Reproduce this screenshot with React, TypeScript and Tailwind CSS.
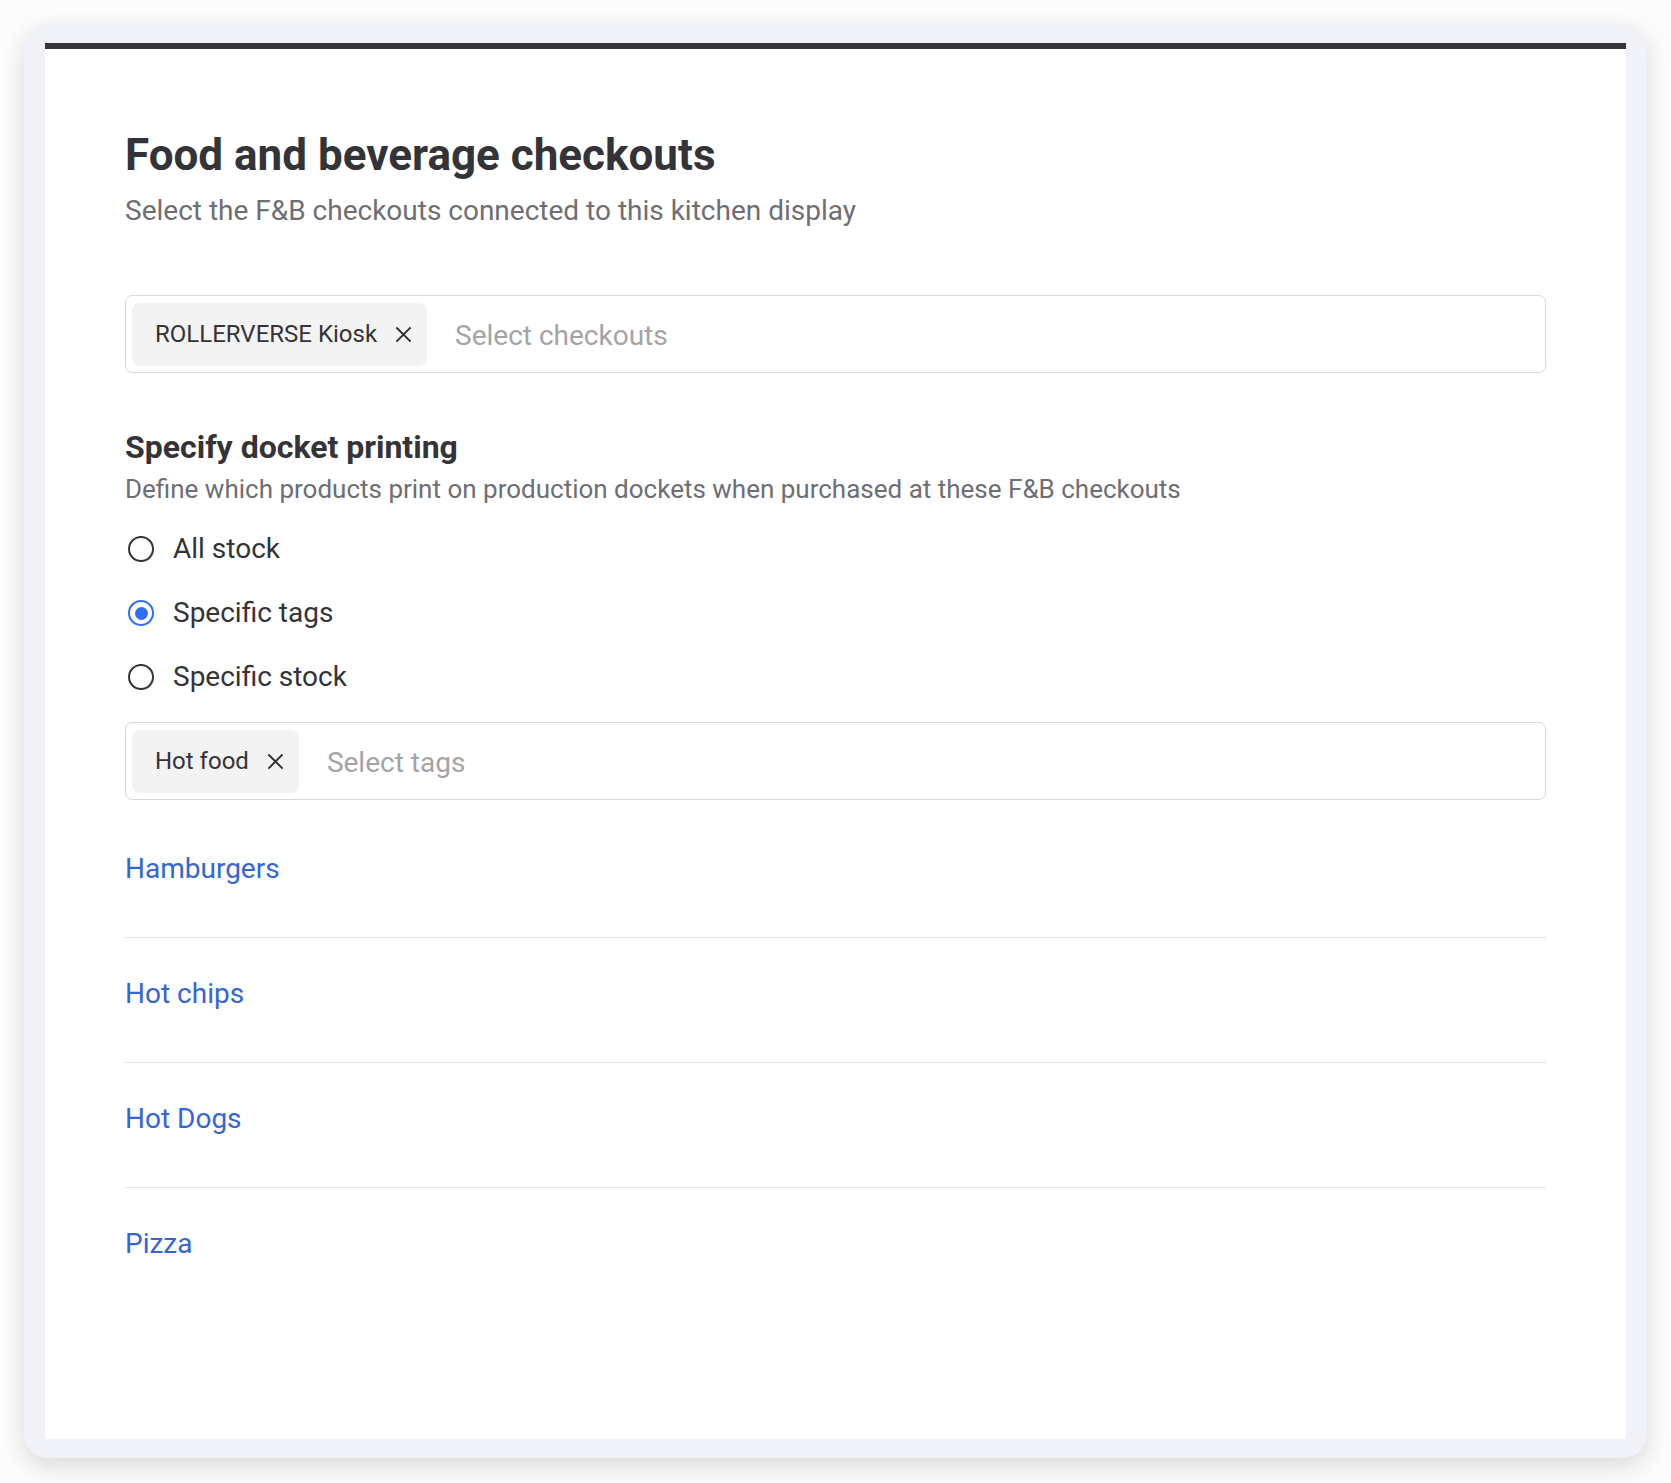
import { useState } from "react";

const font = { fontFamily: "Roboto, 'Noto Sans', sans-serif" };

function XIcon() {
  return (
    <svg width="17" height="17" viewBox="0 0 16 16" fill="none" stroke="#333338" strokeWidth="1.9" strokeLinecap="square">
      <path d="M2 2l12 12M14 2L2 14" />
    </svg>
  );
}

function Chip({ label }: { label: string }) {
  return (
    <div className="flex h-[63px] items-center gap-[18px] rounded-[8px] bg-[#f3f3f4] pl-[23px] pr-[15px] text-[24px] text-[#333338]">
      <span>{label}</span>
      <XIcon />
    </div>
  );
}

function MultiSelect({ chip, placeholder }: { chip: string; placeholder: string }) {
  return (
    <div className="flex h-[78px] items-center gap-[28px] rounded-[7px] border-[1.5px] border-[#d9d9dc] p-[6px]">
      <Chip label={chip} />
      <span className="pt-[4px] text-[28px] text-[#a3a3a8]">{placeholder}</span>
    </div>
  );
}

function Radio({ label, checked, onClick }: { label: string; checked: boolean; onClick: () => void }) {
  return (
    <button type="button" onClick={onClick} className="ml-[3px] flex h-16 items-center gap-[19px] text-left">
      {checked ? (
        <span className="flex h-[26px] w-[26px] items-center justify-center rounded-full border-[2.5px] border-[#2f6df6]">
          <span className="h-[13px] w-[13px] rounded-full bg-[#2f6df6]" />
        </span>
      ) : (
        <span className="h-[26px] w-[26px] rounded-full border-2 border-[#333338]" />
      )}
      <span className="text-[28px] text-[#333338]">{label}</span>
    </button>
  );
}

const options = ["All stock", "Specific tags", "Specific stock"];
const items = ["Hamburgers", "Hot chips", "Hot Dogs", "Pizza"];

export default function App() {
  const [mode, setMode] = useState("Specific tags");

  return (
    <div className="min-h-screen bg-[#fcfcfd] p-6" style={font}>
      <div className="h-[1434px] w-[1623px] rounded-[24px] bg-[#f1f2f7] px-[21px] py-[19px] shadow-[0_8px_24px_rgba(0,0,0,0.14)]">
        <div className="h-full border-t-[6px] border-[#36363b] bg-white pl-[80px] pr-[80px] pt-[80px]">
          <h1 className="text-[44px] font-bold leading-[52px] text-[#333338]">Food and beverage checkouts</h1>
          <p className="mt-3 text-[28px] leading-9 text-[#6e6e74]">
            Select the F&amp;B checkouts connected to this kitchen display
          </p>

          <div className="mt-[66px]">
            <MultiSelect chip="ROLLERVERSE Kiosk" placeholder="Select checkouts" />
          </div>

          <h2 className="mt-[56px] text-[32px] font-bold leading-9 text-[#333338]">Specify docket printing</h2>
          <p className="mt-[6px] text-[26px] leading-9 text-[#6e6e74]">
            Define which products print on production dockets when purchased at these F&amp;B checkouts
          </p>

          <div className="mt-[10px] flex flex-col">
            {options.map((o) => (
              <Radio key={o} label={o} checked={mode === o} onClick={() => setMode(o)} />
            ))}
          </div>

          <div className="mt-[13px]">
            <MultiSelect chip="Hot food" placeholder="Select tags" />
          </div>

          <ul className="mt-[13px]">
            {items.map((it, i) => (
              <li
                key={it}
                className={`pb-[50px] pt-[38px] ${i < items.length - 1 ? "border-b border-[#e6e6e8]" : ""}`}
              >
                <a href="#" className="text-[28px] leading-9 text-[#3366d6]">
                  {it}
                </a>
              </li>
            ))}
          </ul>
        </div>
      </div>
    </div>
  );
}
